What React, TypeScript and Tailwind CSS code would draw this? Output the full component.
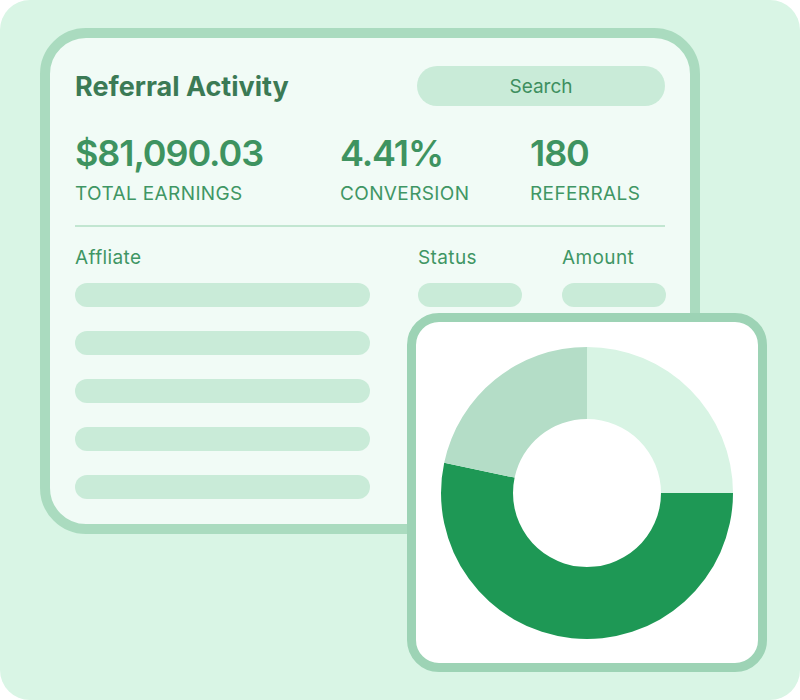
import React from "react";

const font = { fontFamily: "Inter, 'Noto Sans', sans-serif" };

// annular sector, angles in degrees clockwise from 12 o'clock
const sector = (a0: number, a1: number, r0: number, r1: number, c: number) => {
  const p = (a: number, r: number) => {
    const t = (a * Math.PI) / 180;
    return `${(c + r * Math.sin(t)).toFixed(2)} ${(c - r * Math.cos(t)).toFixed(2)}`;
  };
  const large = a1 - a0 > 180 ? 1 : 0;
  return `M ${p(a0, r1)} A ${r1} ${r1} 0 ${large} 1 ${p(a1, r1)} L ${p(a1, r0)} A ${r0} ${r0} 0 ${large} 0 ${p(a0, r0)} Z`;
};

const slices = [
  { from: 0, to: 90, color: "#d8f4e4" },
  { from: 90, to: 282, color: "#1e9855" },
  { from: 282, to: 360, color: "#b4ddc7" },
];

const stats = [
  { value: "$81,090.03", label: "TOTAL EARNINGS" },
  { value: "4.41%", label: "CONVERSION" },
  { value: "180", label: "REFERRALS" },
];

const Donut: React.FC = () => (
  <svg width="292" height="292" viewBox="0 0 292 292">
    {slices.map((s) => (
      <path key={s.from} d={sector(s.from, s.to, 74, 146, 146)} fill={s.color} />
    ))}
  </svg>
);

const App: React.FC = () => {
  return (
    <div className="w-[800px] h-[700px] bg-white" style={font}>
      <div className="relative w-full h-full rounded-[30px] bg-[#d9f5e5] pt-[28px] pl-[40px]">
        <div className="w-[660px] h-[506px] rounded-[46px] border-[10px] border-[#aadbbf] bg-[#f1fbf6] px-[25px] pt-[28px]">
          <div className="flex items-center justify-between">
            <h1 className="pt-[1px] text-[27px] leading-[32px] font-bold text-[#3b7a55]">
              Referral Activity
            </h1>
            <div className="w-[248px] h-[40px] pt-[2px] rounded-full bg-[#c9ebd8] flex items-center justify-center text-[19px] text-[#3e8f5f]">
              Search
            </div>
          </div>

          <div className="grid grid-cols-[265px_190px_1fr] mt-[27px]">
            {stats.map((s) => (
              <div key={s.label}>
                <div className="text-[36px] leading-[40px] font-semibold text-[#3e9360] tracking-[-0.03em]">
                  {s.value}
                </div>
                <div className="mt-[9px] text-[19px] leading-[24px] tracking-[0.02em] text-[#3f9664]">
                  {s.label}
                </div>
              </div>
            ))}
          </div>

          <div className="mt-[19px] h-[2px] bg-[#c2e6d1]" />

          <div className="grid grid-cols-[343px_144px_1fr] mt-[19px] text-[19px] leading-[24px] tracking-[0.02em] text-[#3f9664]">
            <div>Affliate</div>
            <div>Status</div>
            <div>Amount</div>
          </div>

          <div className="mt-[13px] flex flex-col gap-[24px]">
            {[0, 1, 2, 3, 4].map((i) => (
              <div key={i} className="grid grid-cols-[343px_144px_1fr]">
                <div className="w-[295px] h-[24px] rounded-full bg-[#c9ebd8]" />
                <div className="w-[104px] h-[24px] rounded-full bg-[#c9ebd8]" />
                <div className="w-[104px] h-[24px] rounded-full bg-[#c9ebd8]" />
              </div>
            ))}
          </div>
        </div>

        <div className="absolute left-[407px] top-[313px] w-[360px] h-[359px] rounded-[32px] border-[9px] border-[#9dd3b5] bg-white flex items-center justify-center">
          <Donut />
        </div>
      </div>
    </div>
  );
};

export default App;
